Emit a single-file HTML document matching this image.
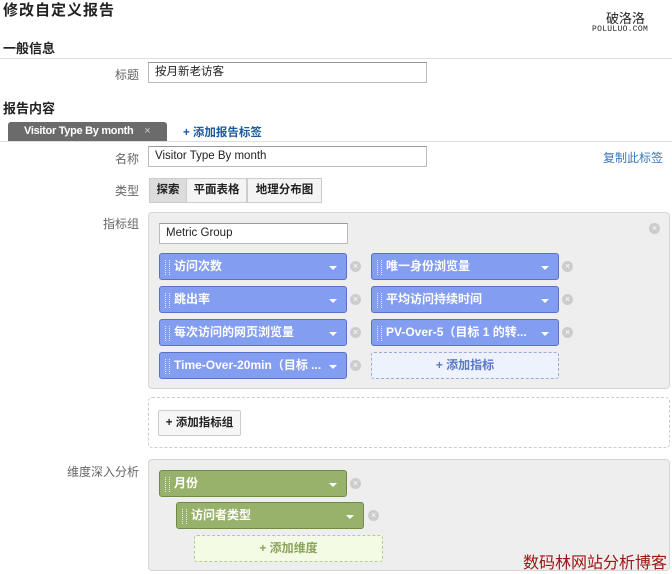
<!DOCTYPE html>
<html><head><meta charset="utf-8"><style>
*{box-sizing:border-box;margin:0;padding:0}
body{width:672px;height:574px;background:#fff;position:relative;overflow:hidden;font-family:"Liberation Sans","Noto Sans CJK SC",sans-serif;font-size:12px;color:#222}
.a{position:absolute}
.h1{font-size:15px;font-weight:bold;letter-spacing:1px}
.h2{font-size:13px;font-weight:bold}
.lbl{color:#666;text-align:right;width:60px;font-size:12px}
.inp{border:1px solid #bbb;border-top-color:#999;background:#fff;font-size:11.5px;padding:0 6px;line-height:19px;white-space:nowrap}
.chip{height:27px;border:1px solid #5a72c6;border-radius:3px;background:#839df0;color:#fff;font-weight:bold;font-size:12px;line-height:25px;padding-left:14px;white-space:nowrap;overflow:hidden}
.chip.g{background:#98b26c;border-color:#6f8a48}
.chip:before{content:"";position:absolute;left:5px;top:6px;width:3px;height:15px;border-left:1px dotted #e8eeff;border-right:1px dotted #e8eeff}
.chip:after{content:"";position:absolute;right:9px;top:12px;border:4px solid transparent;border-top:4px solid #fff}
.x{width:11px;height:11px;border-radius:50%;background:#ccc;color:#fff;font-size:9px;line-height:11px;text-align:center}
.add{border:1px dashed #9aaad6;border-radius:3px;background:#eef2fd;color:#5c78c8;font-weight:bold;text-align:center;line-height:25px}
</style></head><body>
<div class="a h1" style="left:3px;top:-1px">修改自定义报告</div>
<div class="a" style="left:606px;top:8px;font-size:13px">破洛洛</div>
<div class="a" style="left:592px;top:25px;font-size:8px;font-family:'Liberation Mono',monospace;letter-spacing:0.3px">POLULUO.COM</div>
<div class="a h2" style="left:3px;top:38px">一般信息</div>
<div class="a" style="left:0;top:58px;width:672px;height:1px;background:#ddd"></div>
<div class="a lbl" style="left:79px;top:66px">标题</div>
<div class="a inp" style="left:148px;top:62px;width:279px;height:21px">按月新老访客</div>
<div class="a h2" style="left:3px;top:98px">报告内容</div>
<div class="a" style="left:8px;top:122px;width:159px;height:19px;background:#6b6b6b;border-radius:3px 3px 0 0;color:#fff;font-weight:bold;font-size:11px;line-height:19px;padding-left:16px;white-space:nowrap;letter-spacing:-0.3px">Visitor Type By month <span style="color:#ccc;margin-left:8px;font-weight:normal">×</span></div>
<div class="a" style="left:183px;top:124px;color:#1a5a9e;font-weight:bold;font-size:11.5px">+ 添加报告标签</div>
<div class="a" style="left:0;top:141px;width:672px;height:1px;background:#ddd"></div>
<div class="a lbl" style="left:79px;top:150px">名称</div>
<div class="a inp" style="left:148px;top:146px;width:279px;height:21px">Visitor Type By month</div>
<div class="a" style="left:603px;top:149px;color:#3a78b8">复制此标签</div>
<div class="a lbl" style="left:79px;top:182px">类型</div>
<div class="a" style="left:149px;top:178px;width:38px;height:25px;background:#dcdcdc;border:1px solid #ccc;font-weight:bold;line-height:23px;text-align:center;font-size:11.5px">探索</div>
<div class="a" style="left:186px;top:178px;width:61px;height:25px;background:#f4f4f4;border:1px solid #ccc;font-weight:bold;line-height:23px;text-align:center;font-size:11.5px">平面表格</div>
<div class="a" style="left:247px;top:178px;width:75px;height:25px;background:#f4f4f4;border:1px solid #ccc;font-weight:bold;line-height:23px;text-align:center;font-size:11.5px">地理分布图</div>
<div class="a lbl" style="left:79px;top:215px">指标组</div>
<div class="a" style="left:148px;top:212px;width:522px;height:177px;background:#eee;border:1px solid #d6d6d6;border-radius:4px"></div>
<div class="a x" style="left:649px;top:223px">×</div>
<div class="a inp" style="left:159px;top:223px;width:189px;height:21px">Metric Group</div>
<div class="a chip" style="left:159px;top:253px;width:188px">访问次数</div>
<div class="a x" style="left:350px;top:261px">×</div>
<div class="a chip" style="left:371px;top:253px;width:188px">唯一身份浏览量</div>
<div class="a x" style="left:562px;top:261px">×</div>
<div class="a chip" style="left:159px;top:286px;width:188px">跳出率</div>
<div class="a x" style="left:350px;top:294px">×</div>
<div class="a chip" style="left:371px;top:286px;width:188px">平均访问持续时间</div>
<div class="a x" style="left:562px;top:294px">×</div>
<div class="a chip" style="left:159px;top:319px;width:188px">每次访问的网页浏览量</div>
<div class="a x" style="left:350px;top:327px">×</div>
<div class="a chip" style="left:371px;top:319px;width:188px;padding-right:18px">PV-Over-5（目标 1 的转...</div>
<div class="a x" style="left:562px;top:327px">×</div>
<div class="a chip" style="left:159px;top:352px;width:188px;padding-right:18px">Time-Over-20min（目标 ...</div>
<div class="a x" style="left:350px;top:360px">×</div>
<div class="a add" style="left:371px;top:352px;width:188px;height:27px">+ 添加指标</div>
<div class="a" style="left:148px;top:397px;width:522px;height:51px;border:1px dashed #ccc;border-radius:4px"></div>
<div class="a" style="left:158px;top:410px;width:83px;height:26px;background:#f6f6f6;border:1px solid #ccc;border-radius:2px;font-weight:bold;font-size:11.5px;line-height:24px;text-align:center">+ 添加指标组</div>
<div class="a lbl" style="left:59px;top:463px;width:80px;white-space:nowrap;text-align:right">维度深入分析</div>
<div class="a" style="left:148px;top:459px;width:522px;height:112px;background:#eee;border:1px solid #d6d6d6;border-radius:4px"></div>
<div class="a chip g" style="left:159px;top:470px;width:188px">月份</div>
<div class="a x" style="left:350px;top:478px">×</div>
<div class="a chip g" style="left:176px;top:502px;width:188px">访问者类型</div>
<div class="a x" style="left:368px;top:510px">×</div>
<div class="a add" style="left:194px;top:535px;width:189px;height:27px;background:#f3fbe4;border-color:#b6cc8a;color:#8aa35c">+ 添加维度</div>
<div class="a" style="left:523px;top:549px;font-size:16px;color:#a01414">数码林网站分析博客</div>
</body></html>
